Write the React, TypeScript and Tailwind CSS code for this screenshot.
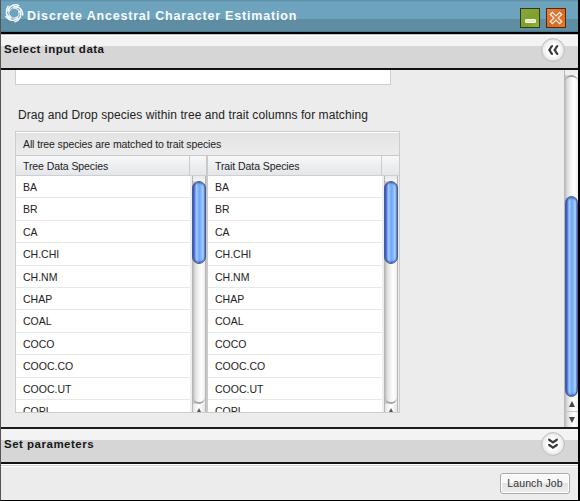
import React from "react";

const species = ["BA", "BR", "CA", "CH.CHI", "CH.NM", "CHAP", "COAL", "COCO", "COOC.CO", "COOC.UT", "COPL"];

const thumb =
  "rounded-full border border-[#4a5a8c] bg-[linear-gradient(90deg,#2b50c8_0%,#5583e2_14%,#a4c6f8_28%,#8dbcf8_40%,#6fa6f5_52%,#86b8f8_68%,#a9d2fb_84%,#4f78cc_100%)] shadow-[inset_0_2px_2px_-1px_#2f54b8,inset_0_-2px_2px_-1px_#2f54b8]";
const track = "bg-[linear-gradient(90deg,#bdbdbd_0%,#dedede_18%,#f2f2f2_45%,#ffffff_70%,#ededed_100%)]";

function Logo() {
  return (
    <svg className="h-[20px] w-[20px] shrink-0" viewBox="0 0 20 20" fill="none" stroke="#f4fafc" strokeLinecap="round">
      {[0, 72, 144, 216, 288].map((a) => (
        <g key={a} transform={`rotate(${a} 10 10)`}>
          <path d="M3.8 8C4.6 3.4 9.6 0.6 14.6 2.4" strokeWidth="1.5" />
          <path d="M5.3 8.8C6.4 5.2 10 3.4 13.6 4.4" strokeWidth="1.1" opacity="0.8" />
        </g>
      ))}
    </svg>
  );
}

function RoundButton({ down = false }: { down?: boolean }) {
  return (
    <div className="flex h-[24px] w-[24px] items-center justify-center rounded-full border border-[#c2c2c2] bg-[radial-gradient(circle,#ffffff_35%,#ededed_62%,#cfcfcf_76%)]">
      <svg
        className={down ? "h-[12px] w-[12px] -rotate-90" : "h-[12px] w-[12px]"}
        viewBox="0 0 12 12"
        fill="#3a3a3a"
      >
        <path d="M5.9 1C3.9 1 3.3 2.2 2.7 3.6L1 6L2.7 8.4C3.3 9.8 3.9 11 5.9 11V8.9C5 8.7 4.8 7.6 3.8 6C4.8 4.4 5 3.3 5.9 3.1Z" />
        <path d="M11.2 1C9.2 1 8.6 2.2 8 3.6L6.3 6L8 8.4C8.6 9.8 9.2 11 11.2 11V8.9C10.3 8.7 10.1 7.6 9.1 6C10.1 4.4 10.3 3.3 11.2 3.1Z" />
      </svg>
    </div>
  );
}

function SectionBar({ title, down }: { title: string; down?: boolean }) {
  return (
    <div
      className={
        "flex shrink-0 justify-between border-b-2 border-[#111] pl-[3px] pr-[13px] " +
        (down
          ? "h-[35px] bg-[linear-gradient(#f3f3f3_11px,#d6d6d6_11px)] pt-[3px]"
          : "h-[36px] bg-[linear-gradient(#c4c4c4_1px,#ffffff_1px,#ffffff_2px,#f3f3f3_2px,#f3f3f3_12px,#d6d6d6_12px)] pt-[4px]")
      }
    >
      <span
        className={
          "whitespace-nowrap text-[11.5px] font-bold leading-[14px] tracking-[0.5px] text-[#161616] " +
          (down ? "mt-[5px]" : "mt-[4px]")
        }
      >
        {title}
      </span>
      <RoundButton down={down} />
    </div>
  );
}

function Column({ title, last }: { title: string; last?: boolean }) {
  return (
    <div className={"flex flex-col " + (last ? "w-[191px]" : "w-[192px] border-r-2 border-[#c9c9c9]")}>
      <div className="flex h-[20px] shrink-0 border-b border-[#cfcfcf] bg-[linear-gradient(#f8f9fa,#eeeff1_45%,#e4e7ea)] text-[10.5px] leading-[20px]">
        <div className="w-[174px] shrink-0 whitespace-nowrap border-r border-[#cccccc] pl-[7px] tracking-[-0.08px]">{title}</div>
      </div>
      <div className="flex min-h-0 flex-1 overflow-hidden">
        <div className="w-[174px] shrink-0 bg-white">
          {species.map((s) => (
            <div key={s} className="h-[22.4px] border-b border-[#e8e8e8] pl-[7px] text-[10.5px] leading-[22px]">
              {s}
            </div>
          ))}
        </div>
        <div className="w-[2px] shrink-0 bg-[#eeeeee]" />
        <div className={"flex h-full w-[14px] shrink-0 flex-col border-x border-[#b5b5b5] " + track}>
          <div className="h-[5px] shrink-0 bg-[linear-gradient(#e8e8e8,#f4f4f4)]" />
          <div className={"-mx-[1px] h-[83px] shrink-0 " + thumb} />
          <div className="flex-1 rounded-b-full border-b-2 border-[#a5a5a5]" />
          <div className="flex h-[8px] shrink-0 items-end justify-center bg-[linear-gradient(90deg,#e5e5e5,#ffffff,#e5e5e5)]">
            <svg className="h-[4px] w-[6px]" viewBox="0 0 6 4"><path d="M3 0L5 4H1Z" fill="#555" /></svg>
          </div>
        </div>
      </div>
    </div>
  );
}

export default function App() {
  return (
    <div className="flex h-[501px] w-[580px] flex-col overflow-hidden border-b border-l border-r-2 border-b-black border-l-[#555] border-r-black bg-[#ececec] font-['Liberation_Sans',Arial,sans-serif] text-[#222]">
      <div className="flex h-[34px] shrink-0 border-b-2 border-black bg-[linear-gradient(#5b8ca4_0px,#6ea3bd_2px,#6ea3bd_19px,#5e8ca2_19px,#608fa5_30px,#46758b_32px)] pl-[3px] pr-[12px] pt-[3px]">
        <Logo />
        <span className="ml-[3px] mt-[5px] whitespace-nowrap text-[12.5px] font-bold leading-[16px] tracking-[0.81px] text-[#f7fbfd]">
          Discrete Ancestral Character Estimation
        </span>
        <div className="ml-auto mt-[5px] flex gap-[6px]">
          <div className="flex h-[20px] w-[20px] items-end justify-center border border-[#343a16] bg-[linear-gradient(135deg,#86a742,#80a028_60%,#92b53f)] pb-[4px]">
            <div className="h-[4px] w-[11px] rounded-[1px] border border-[#f4f7e8] bg-[#dfe7c6]" />
          </div>
          <div className="flex h-[20px] w-[20px] items-center justify-center border border-[#55270c] bg-[linear-gradient(135deg,#e38746,#d7681e_50%,#e67c2b)]">
            <svg className="h-[14px] w-[14px]" viewBox="0 0 14 14" strokeLinecap="square">
              <path d="M3.4 3.4L10.6 10.6M10.6 3.4L3.4 10.6" stroke="#fdeee2" strokeWidth="4.2" />
              <path d="M3.4 3.4L10.6 10.6M10.6 3.4L3.4 10.6" stroke="#d67437" strokeWidth="1.6" />
            </svg>
          </div>
        </div>
      </div>
      <SectionBar title="Select input data" />
      <div className="flex h-[357px] shrink-0">
        <div className="min-w-0 flex-1 pl-[14px]">
          <div className="h-[15px] w-[376px] border-x border-b border-[#cfcfcf] bg-white" />
          <div className="mt-[22px] h-[16px] whitespace-nowrap pl-[3px] text-[12px] leading-[16px] tracking-[0.08px]">
            Drag and Drop species within tree and trait columns for matching
          </div>
          <div className="mt-[8px] flex h-[282px] w-[385px] flex-col border border-[#cccccc]">
            <div className="h-[24px] shrink-0 whitespace-nowrap border-b border-t border-[#c8c8c8] border-t-white bg-[linear-gradient(#e3e3e3,#ececec)] pl-[7px] text-[10.5px] leading-[22px] tracking-[-0.11px]">
              All tree species are matched to trait species
            </div>
            <div className="flex min-h-0 flex-1">
              <Column title="Tree Data Species" />
              <Column title="Trait Data Species" last />
            </div>
          </div>
        </div>
        <div className={"flex w-[14px] shrink-0 flex-col border-l border-[#b9b9b9] " + track}>
          <div className="h-[5px] shrink-0 bg-[#eeeeee]" />
          <div className="h-[8px] shrink-0 rounded-t-full border-t-2 border-[#999]" />
          <div className="h-[113px] shrink-0" />
          <div className={"h-[201px] shrink-0 " + thumb} />
          <div className="flex h-[15px] shrink-0 items-center justify-center border-b border-[#c6c6c6]">
            <svg className="h-[6px] w-[6px]" viewBox="0 0 6 6"><path d="M3 0L6 6H0Z" fill="#444" /></svg>
          </div>
          <div className="flex flex-1 items-center justify-center">
            <svg className="h-[6px] w-[6px]" viewBox="0 0 6 6"><path d="M3 6L6 0H0Z" fill="#444" /></svg>
          </div>
        </div>
      </div>
      <div className="h-[2px] shrink-0 bg-[#1c1c1c]" />
      <SectionBar title="Set parameters" down />
      <div className="flex flex-1 justify-end border-t border-white pr-[8px] pt-[8px] shadow-[inset_0_1px_0_#cccccc,inset_0_2px_0_#ffffff]">
        <button className="h-[21px] w-[70px] whitespace-nowrap rounded-[3px] border border-[#aaaaaa] bg-[linear-gradient(#f8f8f8_50%,#e3e3e3_50%,#eeeeee)] text-[10.5px] leading-[19px] tracking-[0.1px] text-[#333] shadow-[inset_0_0_0_1px_#ffffff]">
          Launch Job
        </button>
      </div>
    </div>
  );
}
